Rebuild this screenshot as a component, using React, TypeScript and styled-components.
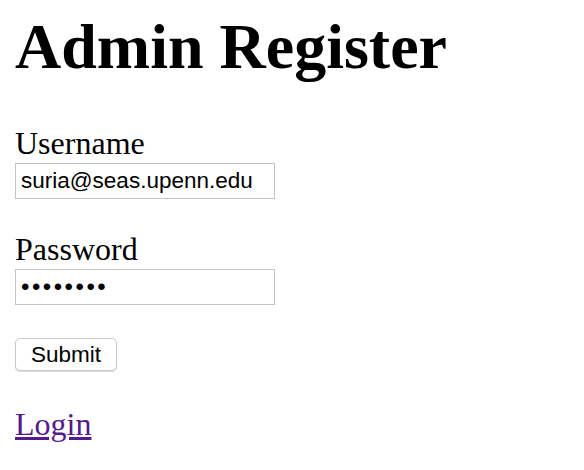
import React from "react";
import styled, { createGlobalStyle } from "styled-components";

const Global = createGlobalStyle`
  html, body { margin: 0; padding: 0; background: #fff; }
  body { font-family: "Liberation Serif", "Times New Roman", serif; color: #000; }
`;

const Page = styled.div`
  padding: 0 15px;
`;

const Title = styled.h1`
  margin: 0;
  padding-top: 10px;
  font-size: 64px;
  font-weight: bold;
  line-height: 74px;
`;

const Form = styled.form`
  display: flex;
  flex-direction: column;
  align-items: flex-start;
  margin-top: 41px;
`;

const Field = styled.div`
  display: flex;
  flex-direction: column;
  align-items: flex-start;
  margin-bottom: 32px;
`;

const Label = styled.label`
  font-size: 32px;
  line-height: 36px;
`;

const Input = styled.input<{ $secret?: boolean }>`
  box-sizing: border-box;
  width: 260px;
  height: 36px;
  margin-top: 2px;
  padding: 0 5px;
  border: 1px solid #c4c4c4;
  border-radius: 0;
  font-family: "Liberation Sans", Arial, sans-serif;
  font-size: ${(p) => (p.$secret ? "24px" : "22.5px")};
  letter-spacing: ${(p) => (p.$secret ? "2.5px" : "0")};
  color: #000;
  outline: none;
`;

const Button = styled.button`
  box-sizing: border-box;
  width: 102px;
  height: 33px;
  margin-top: 1px;
  padding: 0;
  background: #fff;
  border: 1px solid #c9c9c9;
  border-radius: 5px;
  box-shadow: 0 1px 1px rgba(0, 0, 0, 0.15);
  font-family: "Liberation Sans", Arial, sans-serif;
  font-size: 22.5px;
  color: #000;
`;

const LinkText = styled.a`
  display: inline-block;
  margin-top: 35px;
  font-size: 32px;
  line-height: 36px;
  color: #551a8b;
  text-decoration: underline;
`;

export default function App() {
  return (
    <>
      <Global />
      <Page>
        <Title>Admin Register</Title>
        <Form onSubmit={(e) => e.preventDefault()}>
          <Field>
            <Label htmlFor="u">Username</Label>
            <Input id="u" type="text" defaultValue="suria@seas.upenn.edu" />
          </Field>
          <Field>
            <Label htmlFor="p">Password</Label>
            <Input id="p" type="password" $secret defaultValue="password" />
          </Field>
          <Button type="submit">Submit</Button>
        </Form>
        <LinkText href="#login">Login</LinkText>
      </Page>
    </>
  );
}
